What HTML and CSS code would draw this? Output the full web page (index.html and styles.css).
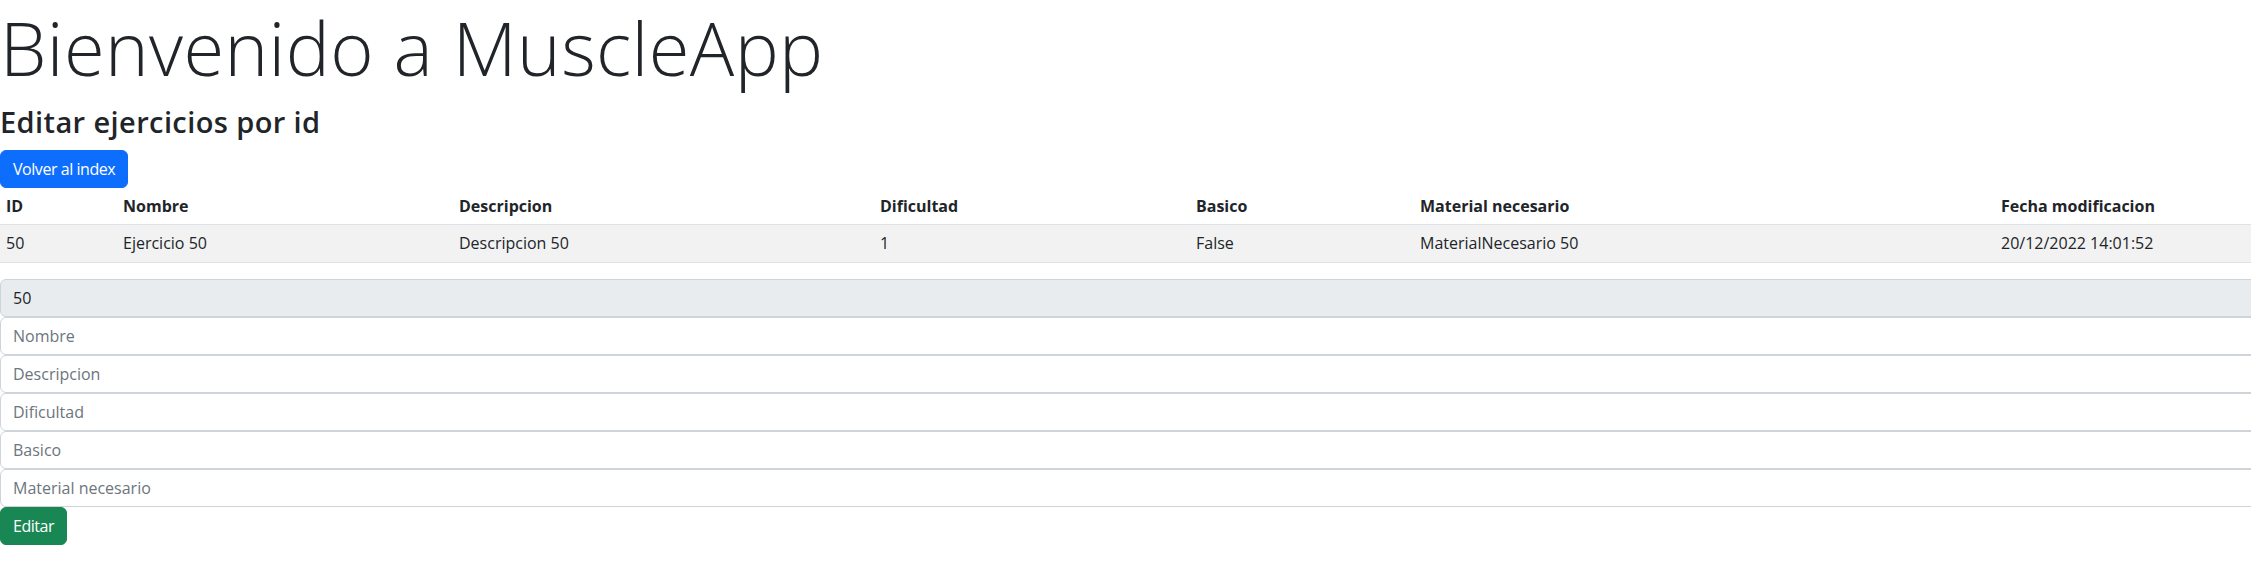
FILE: index.html
```html
<!DOCTYPE html>
<html lang="es">
<head>
<meta charset="utf-8">
<title>MuscleApp</title>
<link rel="stylesheet" href="styles.css">
</head>
<body>
<main class="page">
  <h1 class="display">Bienvenido a MuscleApp</h1>
  <h3 class="subtitle">Editar ejercicios por id</h3>
  <a class="btn btn-primary" href="#">Volver al index</a>
  <table class="table">
    <colgroup>
      <col class="c-id"><col class="c-nombre"><col class="c-desc"><col class="c-dif"><col class="c-basico"><col class="c-mat"><col class="c-fecha">
    </colgroup>
    <thead>
      <tr>
        <th>ID</th><th>Nombre</th><th>Descripcion</th><th>Dificultad</th><th>Basico</th><th>Material necesario</th><th>Fecha modificacion</th>
      </tr>
    </thead>
    <tbody>
      <tr class="striped">
        <td>50</td><td>Ejercicio 50</td><td>Descripcion 50</td><td>1</td><td>False</td><td>MaterialNecesario 50</td><td>20/12/2022 14:01:52</td>
      </tr>
    </tbody>
  </table>
  <form class="form">
    <input class="form-control" type="text" value="50" disabled>
    <input class="form-control" type="text" placeholder="Nombre">
    <input class="form-control" type="text" placeholder="Descripcion">
    <input class="form-control" type="text" placeholder="Dificultad">
    <input class="form-control" type="text" placeholder="Basico">
    <input class="form-control" type="text" placeholder="Material necesario">
  </form>
  <button class="btn btn-success" type="button">Editar</button>
</main>
</body>
</html>
```

FILE: styles.css
```css
* { box-sizing: border-box; }
html, body { margin: 0; padding: 0; background: #fff; }
body {
  font-family: "Open Sans", "Noto Sans", sans-serif;
  font-size: 16px;
  line-height: 1.5;
  color: #212529;
}
.page { display: flex; flex-direction: column; align-items: flex-start; }
.display {
  font-size: 74px;
  font-weight: 300;
  line-height: 1.3;
  letter-spacing: 0.4px;
  margin: 0 0 9px 0;
  padding-top: 0;
}
.subtitle {
  font-size: 29px;
  font-weight: 600;
  line-height: 1.2;
  letter-spacing: 0.4px;
  margin: 0 0 10px 0;
}
.btn {
  display: inline-block;
  font-family: inherit;
  font-size: 16px;
  line-height: 24px;
  letter-spacing: -0.45px;
  padding: 6px 12px;
  border: 1px solid transparent;
  border-radius: 6px;
  color: #fff;
  text-decoration: none;
  cursor: pointer;
}
.btn-primary { background: #0d6efd; border-color: #0d6efd; }
.btn-success { background: #198754; border-color: #198754; }
.table {
  width: 100%;
  table-layout: fixed;
  border-collapse: collapse;
  margin-bottom: 16px;
}
.c-id { width: 117px; }
.c-nombre { width: 336px; }
.c-desc { width: 421px; }
.c-dif { width: 316px; }
.c-basico { width: 224px; }
.c-mat { width: 581px; }
.c-fecha { width: 256px; }
.table th, .table td {
  padding: 6px 6px;
  text-align: left;
  border-bottom: 1px solid #dee2e6;
  white-space: nowrap;
  overflow: hidden;
}
.table td { padding-top: 6.5px; padding-bottom: 6.5px; }
.table th { font-weight: 700; }
.striped td { background: #f2f2f2; }
.form { width: 100%; overflow: hidden; display: flex; flex-direction: column; }
.form-control {
  display: block;
  width: calc(100% + 8px);
  font-family: inherit;
  font-size: 16px;
  line-height: 24px;
  padding: 6px 12px;
  color: #212529;
  background: #fff;
  border: 1px solid #ced4da;
  border-radius: 6px;
  margin: 0;
}
.form-control::placeholder { color: #6c757d; opacity: 1; }
.form-control:disabled { background: #e9ecef; color: #212529; opacity: 1; }
```
